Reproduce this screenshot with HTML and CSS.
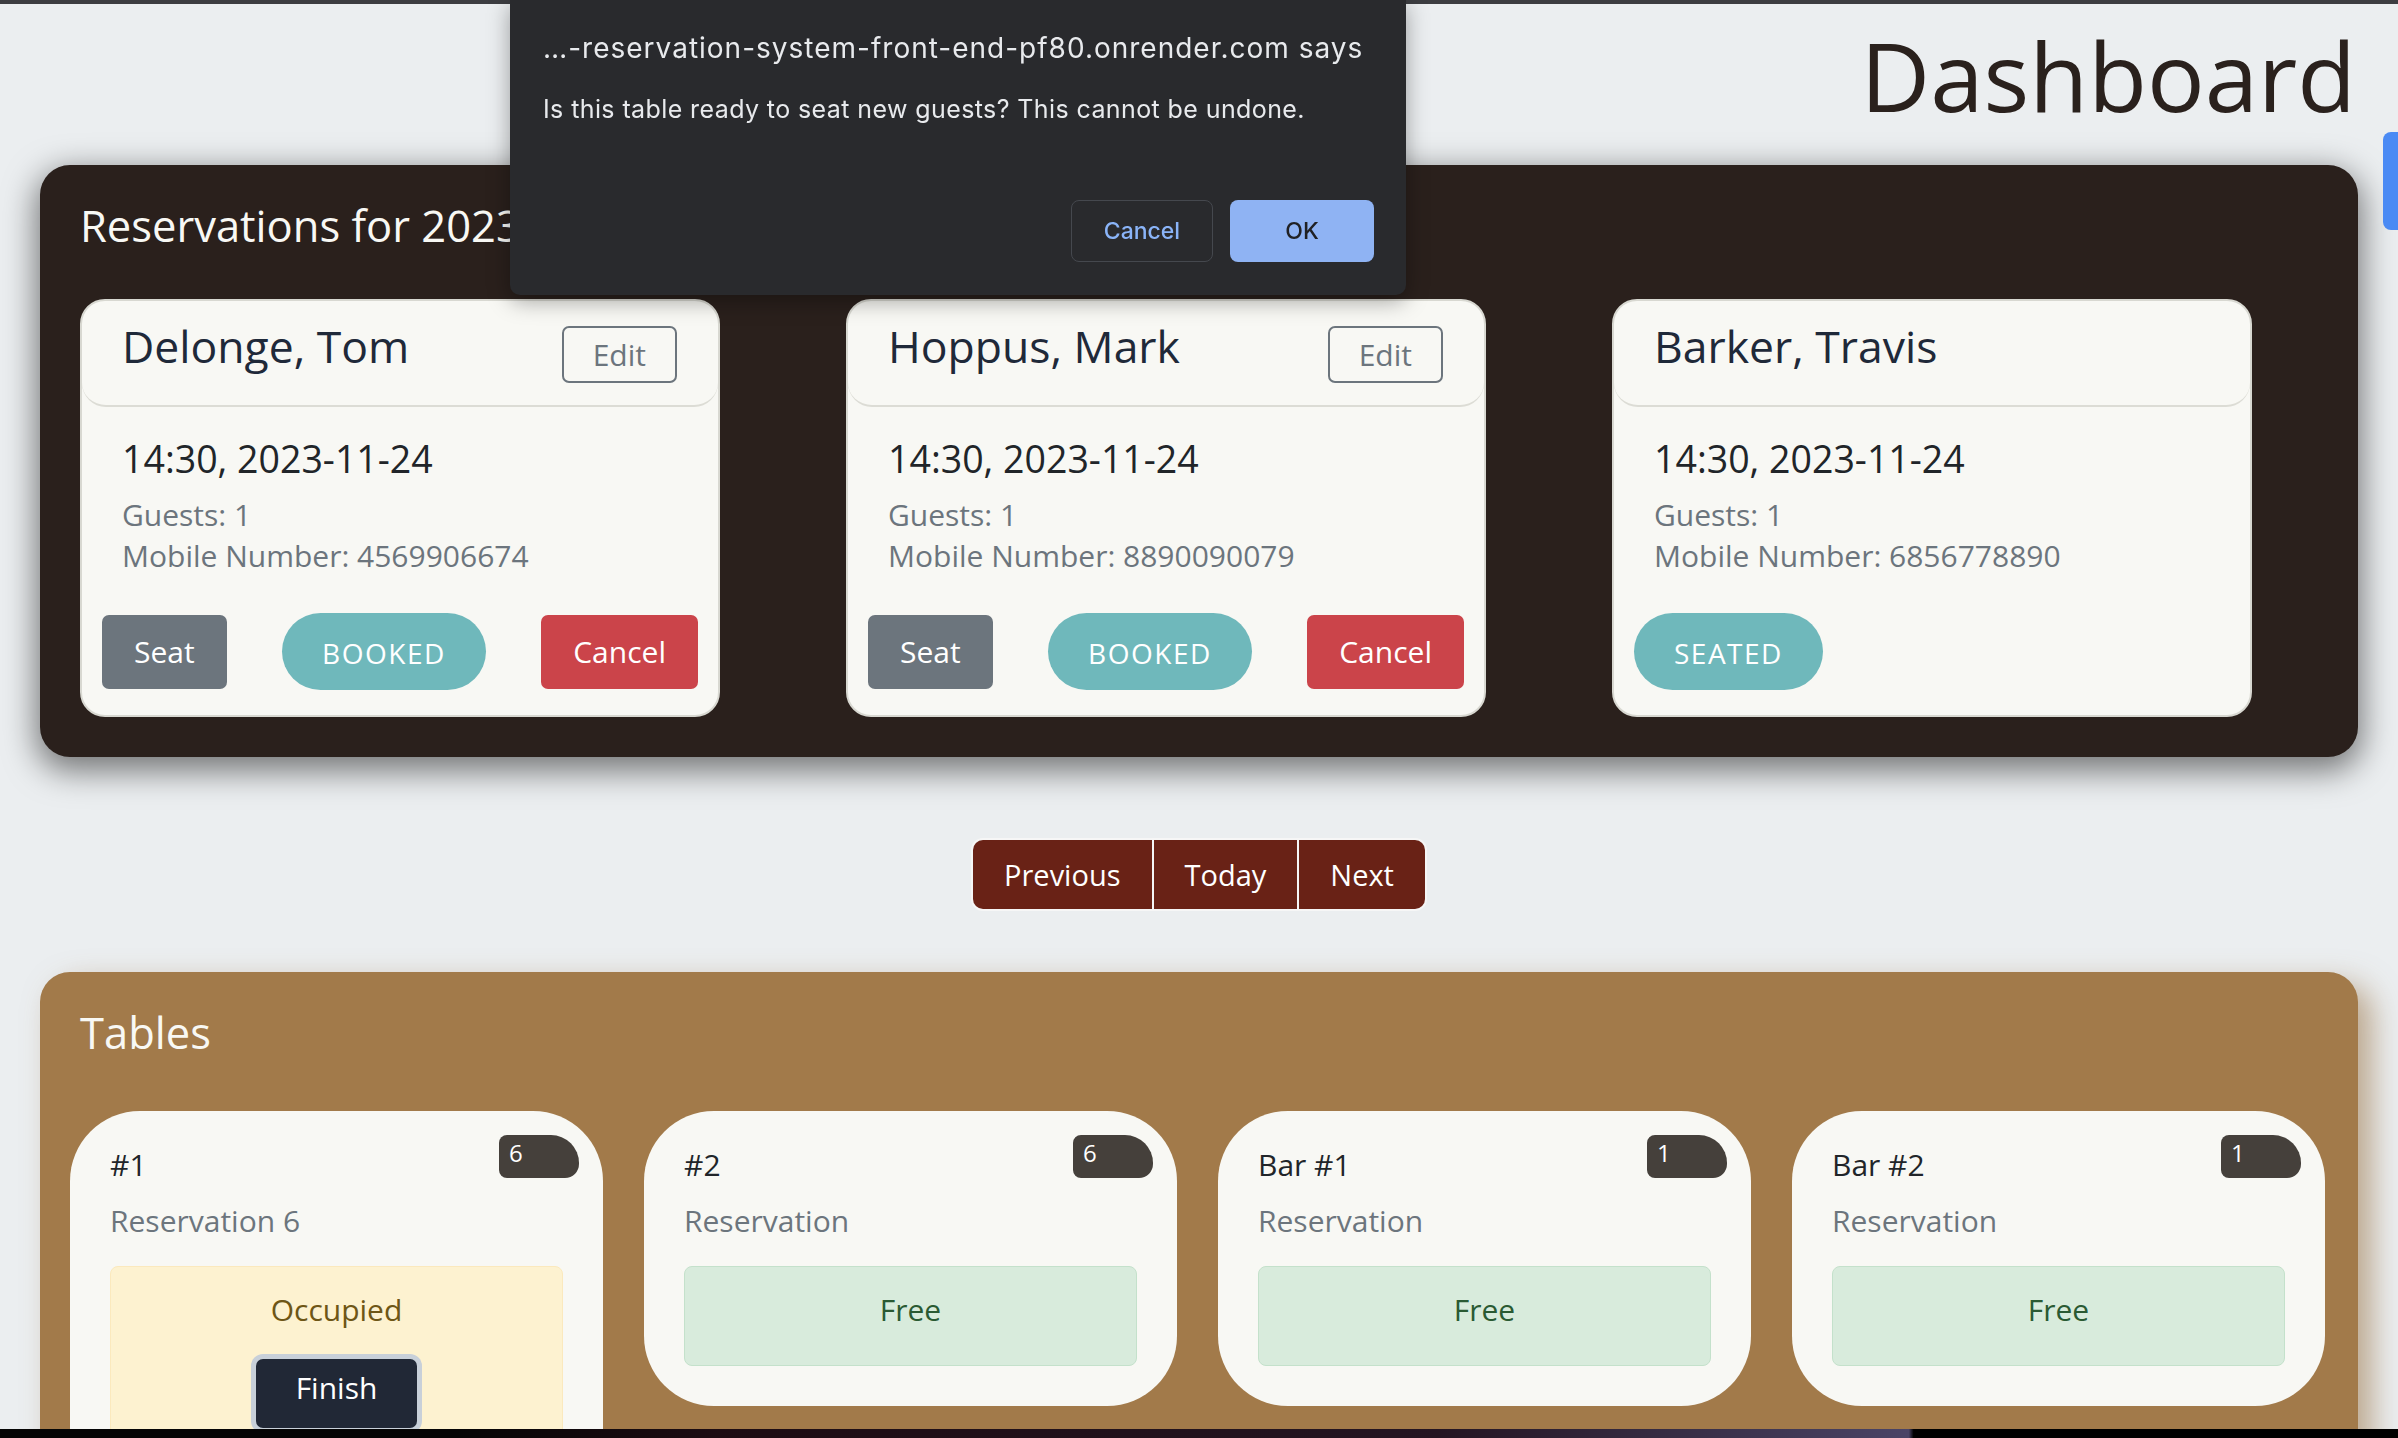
FILE: index.html
```html
<!DOCTYPE html>
<html lang="en">
<head>
<meta charset="utf-8">
<title>Dashboard</title>
<link rel="stylesheet" href="styles.css">
</head>
<body>
<div class="topbar"></div>
<header class="page-head">
  <h1 class="page-title">Dashboard</h1>
</header>
<main>
  <section class="panel res-panel">
    <h2 class="panel-title">Reservations for 2023-11-24</h2>
    <div class="res-row">
      <article class="res-card">
        <div class="res-head">
          <h3 class="res-name">Delonge, Tom</h3>
          <button class="btn-edit">Edit</button>
        </div>
        <div class="res-body">
          <p class="res-date">14:30, 2023-11-24</p>
          <p class="res-meta first">Guests: 1</p>
          <p class="res-meta">Mobile Number: 4569906674</p>
          <div class="res-actions">
            <button class="btn btn-seat">Seat</button>
            <span class="status-pill">BOOKED</span>
            <button class="btn btn-cancel">Cancel</button>
          </div>
        </div>
      </article>
      <article class="res-card">
        <div class="res-head">
          <h3 class="res-name">Hoppus, Mark</h3>
          <button class="btn-edit">Edit</button>
        </div>
        <div class="res-body">
          <p class="res-date">14:30, 2023-11-24</p>
          <p class="res-meta first">Guests: 1</p>
          <p class="res-meta">Mobile Number: 8890090079</p>
          <div class="res-actions">
            <button class="btn btn-seat">Seat</button>
            <span class="status-pill">BOOKED</span>
            <button class="btn btn-cancel">Cancel</button>
          </div>
        </div>
      </article>
      <article class="res-card">
        <div class="res-head">
          <h3 class="res-name">Barker, Travis</h3>
        </div>
        <div class="res-body">
          <p class="res-date">14:30, 2023-11-24</p>
          <p class="res-meta first">Guests: 1</p>
          <p class="res-meta">Mobile Number: 6856778890</p>
          <div class="res-actions">
            <span class="status-pill">SEATED</span>
          </div>
        </div>
      </article>
    </div>
  </section>

  <nav class="pager">
    <button class="pager-btn">Previous</button>
    <button class="pager-btn">Today</button>
    <button class="pager-btn">Next</button>
  </nav>

  <section class="panel tables-panel">
    <h2 class="panel-title tables-title">Tables</h2>
    <div class="table-row">
      <article class="table-card">
        <span class="cap-badge">6</span>
        <p class="table-name">#1</p>
        <p class="table-res">Reservation 6</p>
        <div class="table-status occupied">
          <p class="status-text">Occupied</p>
          <button class="btn-finish">Finish</button>
        </div>
      </article>
      <article class="table-card">
        <span class="cap-badge">6</span>
        <p class="table-name">#2</p>
        <p class="table-res">Reservation</p>
        <div class="table-status free">
          <p class="status-text">Free</p>
        </div>
      </article>
      <article class="table-card">
        <span class="cap-badge">1</span>
        <p class="table-name">Bar #1</p>
        <p class="table-res">Reservation</p>
        <div class="table-status free">
          <p class="status-text">Free</p>
        </div>
      </article>
      <article class="table-card">
        <span class="cap-badge">1</span>
        <p class="table-name">Bar #2</p>
        <p class="table-res">Reservation</p>
        <div class="table-status free">
          <p class="status-text">Free</p>
        </div>
      </article>
    </div>
  </section>
</main>

<div class="dialog" role="dialog">
  <p class="dialog-title">…-reservation-system-front-end-pf80.onrender.com says</p>
  <p class="dialog-msg">Is this table ready to seat new guests? This cannot be undone.</p>
  <div class="dialog-actions">
    <button class="dlg-btn dlg-cancel">Cancel</button>
    <button class="dlg-btn dlg-ok">OK</button>
  </div>
</div>
<div class="side-tab"></div>
<div class="dock-edge"></div>
</body>
</html>
```

FILE: styles.css
```css
html {
  overflow: hidden;
}
body {
  margin: 0;
  background: #ebeef0;
  font-family: "Open Sans", "Noto Sans", sans-serif;
  color: #212529;
}
p { margin: 0; }
button { font-family: inherit; cursor: pointer; }

.topbar {
  height: 4px;
  background: #3c3d41;
}

.page-head {
  padding-right: 42px;
  margin-top: 13px;
  margin-bottom: 33px;
}
.page-title {
  margin: 0;
  text-align: right;
  font-size: 96px;
  font-weight: 500;
  line-height: 1.2;
  color: #2a211d;
}

.panel {
  margin: 0 40px;
  border-radius: 30px;
}
.panel-title {
  margin: 0;
  font-size: 43.5px;
  font-weight: 400;
  line-height: 60px;
  color: #f8f8f4;
}

/* Reservations */
.res-panel {
  background: #2a201c;
  padding: 31px 40px 40px;
  box-shadow: 0 10px 32px 4px rgba(0, 0, 0, 0.5);
}
.res-row {
  display: flex;
  gap: 126px;
  margin-top: 43px;
}
.res-card {
  width: 640px;
  box-sizing: border-box;
  background: #f8f8f4;
  border: 2px solid #d8d8d1;
  border-radius: 25px;
}
.res-head {
  display: flex;
  justify-content: space-between;
  align-items: flex-start;
  height: 106px;
  box-sizing: border-box;
  padding: 15px 41px 0 40px;
  border-bottom: 2px solid #dcdcd5;
  border-radius: 0 0 24px 24px;
}
.res-name {
  margin: 0;
  font-size: 44.5px;
  font-weight: 400;
  line-height: 60px;
  color: #1f2939;
}
.btn-edit {
  margin-top: 10px;
  background: transparent;
  border: 2px solid #6c757d;
  border-radius: 7px;
  color: #6c757d;
  font-size: 30px;
  line-height: 45px;
  padding: 4px 29px;
}
.res-body {
  padding: 31px 20px 25px;
}
.res-date {
  padding-left: 20px;
  font-size: 37.5px;
  line-height: 42px;
  color: #212529;
}
.res-meta {
  padding-left: 20px;
  font-size: 30px;
  line-height: 41px;
  color: #6c757d;
}
.res-meta.first { margin-top: 14px; }
.res-actions {
  display: flex;
  justify-content: space-between;
  align-items: center;
  margin-top: 37px;
  height: 77px;
}
.btn {
  border: 0;
  border-radius: 7px;
  color: #fff;
  font-size: 30px;
  line-height: 46px;
  padding: 14px 32px;
}
.btn-seat { background: #6c757d; }
.btn-cancel { background: #cb444a; }
.status-pill {
  display: inline-block;
  background: #6fb8bb;
  color: #fff;
  border-radius: 40px;
  font-size: 28px;
  letter-spacing: 1.5px;
  line-height: 42px;
  padding: 19px 40px 16px;
}

/* Pager */
.pager {
  display: flex;
  width: max-content;
  margin: 81px auto 61px;
  padding: 2px;
  gap: 2px;
  background: #f6f6f6;
  border-radius: 12px;
}
.pager-btn {
  border: 0;
  background: #692216;
  color: #fff;
  font-size: 29px;
  line-height: 45px;
  padding: 12px 31px;
}
.pager-btn:first-child { border-radius: 10px 0 0 10px; }
.pager-btn:last-child { border-radius: 0 10px 10px 0; }

/* Tables */
.tables-panel {
  background: #a27a4a;
  padding: 31px 30px 40px;
  box-shadow: 14px 12px 30px rgba(150, 110, 60, 0.55);
}
.tables-title { padding-left: 10px; }
.table-row {
  display: flex;
  align-items: flex-start;
  gap: 41px;
  margin-top: 48px;
}
.table-card {
  position: relative;
  width: 533px;
  box-sizing: border-box;
  background: #f8f8f4;
  border-radius: 70px;
  padding: 31px 40px 40px;
}
.cap-badge {
  position: absolute;
  top: 24px;
  right: 24px;
  width: 80px;
  height: 43px;
  box-sizing: border-box;
  padding: 3px 0 0 10px;
  background: #45403b;
  color: #fff;
  font-size: 24px;
  line-height: 30px;
  border-radius: 8px 28px 14px 8px;
}
.table-name {
  font-size: 30px;
  line-height: 45px;
  color: #212529;
}
.table-res {
  margin-top: 11px;
  font-size: 30px;
  line-height: 45px;
  color: #6c757d;
}
.table-status {
  margin-top: 23px;
  border-radius: 8px;
  text-align: center;
  padding: 20px 0 33px;
}
.status-text {
  font-size: 30px;
  line-height: 45px;
}
.table-status.free {
  background: #d8ebdc;
  border: 1px solid #c4e1cb;
  color: #2a5a33;
}
.table-status.occupied {
  background: #fdf2d0;
  border: 1px solid #fbe9bd;
  color: #6e5616;
}
.btn-finish {
  margin-top: 27px;
  background: #212836;
  color: #fff;
  border: 0;
  border-radius: 7px;
  box-shadow: 0 0 0 5px #c8d0d9;
  font-size: 30px;
  line-height: 45px;
  padding: 6px 40px 18px;
}

/* Browser dialog overlay */
.dialog {
  position: fixed;
  top: 0;
  left: 510px;
  width: 896px;
  box-sizing: border-box;
  padding: 31px 32px 33px 33px;
  background: #292a2d;
  border-radius: 0 0 10px 10px;
  box-shadow: 0 6px 22px rgba(0, 0, 0, 0.35);
  font-family: Inter, "Liberation Sans", sans-serif;
  color: #e8eaed;
  z-index: 10;
}
.dialog-title {
  font-size: 28px;
  letter-spacing: 1px;
  line-height: 34px;
  white-space: nowrap;
}
.dialog-msg {
  margin-top: 29px;
  font-size: 25px;
  letter-spacing: 0.4px;
  line-height: 30px;
  white-space: nowrap;
}
.dialog-actions {
  display: flex;
  justify-content: flex-end;
  gap: 17px;
  margin-top: 76px;
}
.dlg-btn {
  height: 62px;
  border-radius: 8px;
  font-family: Inter, "Liberation Sans", sans-serif;
  font-size: 23px;
  font-weight: 500;
}
.dlg-cancel {
  width: 142px;
  background: transparent;
  border: 1.5px solid #45484e;
  color: #8ab4f8;
}
.dlg-ok {
  width: 144px;
  background: #8fb3f3;
  border: 0;
  color: #202124;
}

.side-tab {
  position: fixed;
  top: 132px;
  right: 0;
  width: 15px;
  height: 98px;
  background: #4a8af4;
  border-radius: 8px 0 0 8px;
}
.dock-edge {
  position: fixed;
  left: 0;
  right: 0;
  bottom: 0;
  height: 9px;
  background: linear-gradient(90deg, #050505 0%, #050505 19%, #1d0c13 30%, #241522 60%, #4a4466 79.6%, #000 79.8%, #000 100%);
  z-index: 20;
}
```
